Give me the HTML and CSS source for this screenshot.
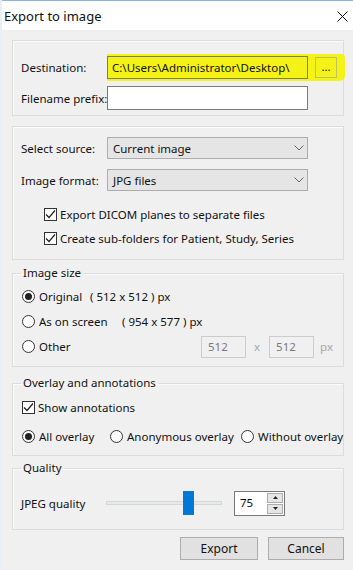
FILE: index.html
```html
<!DOCTYPE html>
<html>
<head>
<meta http-equiv="Content-Type" content="text/html; charset=utf-8">
<title>Export to image</title>
<link rel="stylesheet" href="styles.css">
</head>
<body>
<div class="window">
  <div class="titlebar">
    <span class="title">Export to image</span>
    <svg class="close" width="11" height="11" viewBox="0 0 11 11"><path d="M0.5 0.5 L10.5 10.5 M10.5 0.5 L0.5 10.5" stroke="#111" stroke-width="1" fill="none"/></svg>
  </div>
  <div class="content">
    <fieldset class="group dest">
      <div class="form-row">
        <span class="lbl">Destination:</span>
        <span class="mark">
          <span class="textbox hl">C:\Users\Administrator\Desktop\</span>
          <span class="browse">...</span>
        </span>
      </div>
      <div class="form-row gap">
        <span class="lbl">Filename prefix:</span>
        <span class="textbox tall"></span>
      </div>
    </fieldset>

    <fieldset class="group source">
      <div class="form-row">
        <span class="lbl">Select source:</span>
        <span class="combo">Current image<svg class="chev" width="10" height="6" viewBox="0 0 10 6"><path d="M0.5 0.5 L5 5 L9.5 0.5" stroke="#666" fill="none"/></svg></span>
      </div>
      <div class="form-row combo-gap">
        <span class="lbl">Image format:</span>
        <span class="combo">JPG files<svg class="chev" width="10" height="6" viewBox="0 0 10 6"><path d="M0.5 0.5 L5 5 L9.5 0.5" stroke="#666" fill="none"/></svg></span>
      </div>
      <div class="check-row indent first">
        <span class="checkbox"><svg width="11" height="11" viewBox="0 0 11 11"><path d="M1 5.5 L4 8.5 L10 1.5" stroke="#222" stroke-width="1.2" fill="none"/></svg></span>
        <span>Export DICOM planes to separate files</span>
      </div>
      <div class="check-row indent second">
        <span class="checkbox"><svg width="11" height="11" viewBox="0 0 11 11"><path d="M1 5.5 L4 8.5 L10 1.5" stroke="#222" stroke-width="1.2" fill="none"/></svg></span>
        <span>Create sub-folders for Patient, Study, Series</span>
      </div>
    </fieldset>

    <fieldset class="group size">
      <legend>Image size</legend>
      <div class="radio-row">
        <span class="opt w-orig"><span class="radio on"></span>Original</span>
        <span>( 512 x 512 ) px</span>
      </div>
      <div class="radio-row">
        <span class="opt w-screen"><span class="radio"></span>As on screen</span>
        <span>( 954 x 577 ) px</span>
      </div>
      <div class="radio-row">
        <span class="opt w-other"><span class="radio"></span>Other</span>
        <span class="numbox">512</span>
        <span class="dim times">x</span>
        <span class="numbox">512</span>
        <span class="dim px">px</span>
      </div>
    </fieldset>

    <fieldset class="group overlay">
      <legend>Overlay and annotations</legend>
      <div class="check-row">
        <span class="checkbox"><svg width="11" height="11" viewBox="0 0 11 11"><path d="M1 5.5 L4 8.5 L10 1.5" stroke="#222" stroke-width="1.2" fill="none"/></svg></span>
        <span>Show annotations</span>
      </div>
      <div class="radio-row ov">
        <span class="opt w-all"><span class="radio on"></span>All overlay</span>
        <span class="opt w-anon"><span class="radio"></span>Anonymous overlay</span>
        <span class="opt"><span class="radio"></span>Without overlay</span>
      </div>
    </fieldset>

    <fieldset class="group quality">
      <legend>Quality</legend>
      <div class="quality-row">
        <span class="lbl">JPEG quality</span>
        <span class="slider"><span class="track"></span><span class="thumb"></span></span>
        <span class="spin">
          <span class="spin-val">75</span>
          <span class="spin-btns">
            <span class="spin-btn"><svg width="5" height="3" viewBox="0 0 5 3"><path d="M0 3 L2.5 0 L5 3 Z" fill="#222"/></svg></span>
            <span class="spin-btn"><svg width="5" height="3" viewBox="0 0 5 3"><path d="M0 0 L2.5 3 L5 0 Z" fill="#222"/></svg></span>
          </span>
        </span>
      </div>
    </fieldset>

    <div class="buttons">
      <span class="btn export">Export</span>
      <span class="btn cancel">Cancel</span>
    </div>
  </div>
</div>
</body>
</html>
```

FILE: styles.css
```css
body { margin: 0; background: #f0f0f0; }
.window {
  width: 353px;
  height: 570px;
  background: #f0f0f0;
  font-family: "Noto Sans", "Open Sans", sans-serif;
  font-size: 11.5px;
  color: #111;
  overflow: hidden;
  box-sizing: border-box;
  border-left: 2px solid #e9eefb;
}
.titlebar {
  height: 30px;
  box-sizing: border-box;
  background: #fff;
  border-top: 1px solid #8fb2dd;
  display: flex;
  align-items: center;
  justify-content: space-between;
  padding: 0 5px 0 2px;
}
.title { font-size: 13px; }
.close { margin-top: 1px; }

.content { padding: 10px 9px 0 10px; }

.group {
  margin: 0;
  padding: 0 8px;
  border: 1px solid #dcdcdc;
  box-shadow: inset 1px 1px 0 #fbfbfb;
  min-width: 0;
}
.group legend {
  padding: 0 2px;
  margin-left: 0;
  line-height: 16px;
  height: 16px;
}

.form-row { display: flex; align-items: center; }
.lbl { width: 86px; flex: none; white-space: nowrap; }

/* destination */
.dest { padding-top: 15px; padding-bottom: 5px; }
.dest .form-row.gap { margin-top: 7px; }
.mark {
  display: flex;
  align-items: center;
  background: #f5f218;
  padding: 2px 8px 2px 0;
  margin: -2px 0;
  border-radius: 0 4px 5px 0;
}
.textbox {
  width: 201px;
  height: 23px;
  box-sizing: border-box;
  border: 1px solid #7a7a7a;
  background: #fff;
  padding: 0 4px;
  line-height: 21px;
  white-space: nowrap;
  overflow: hidden;
}
.textbox.tall { height: 24px; }
.textbox.hl { background: #f5f218; }
.browse {
  margin-left: 7px;
  width: 22px;
  height: 21px;
  box-sizing: border-box;
  border: 1px solid #c2c25a;
  text-align: center;
  line-height: 17px;
}

/* source */
.source { margin-top: 10px; padding-top: 10px; padding-bottom: 14px; }
.combo {
  width: 201px;
  height: 22px;
  box-sizing: border-box;
  border: 1px solid #adadad;
  background: #e5e5e5;
  display: flex;
  align-items: center;
  justify-content: space-between;
  padding: 0 3px 0 5px;
}
.combo-gap { margin-top: 10px; }
.check-row { display: flex; align-items: center; height: 14px; }
.check-row.indent { padding-left: 23px; }
.check-row.first { margin-top: 16px; }
.check-row.second { margin-top: 10px; }
.checkbox {
  width: 13px;
  height: 13px;
  box-sizing: border-box;
  border: 1px solid #333;
  background: #fff;
  margin-right: 3px;
  display: flex;
  align-items: center;
  justify-content: center;
  flex: none;
}

/* size */
.size { margin-top: 5px; padding-top: 3px; padding-bottom: 7px; }
.radio-row { display: flex; align-items: center; height: 25px; }
.opt { display: flex; align-items: center; white-space: nowrap; flex: none; }
.radio {
  width: 13px;
  height: 13px;
  box-sizing: border-box;
  border: 1px solid #333;
  border-radius: 50%;
  background: #fff;
  margin: 0 4px 0 1px;
  position: relative;
  flex: none;
}
.radio.on::after {
  content: "";
  position: absolute;
  left: 2px;
  top: 2px;
  width: 7px;
  height: 7px;
  border-radius: 50%;
  background: #222;
}
.w-orig { width: 69px; }
.w-screen { width: 101px; }
.w-other { width: 180px; }
.numbox {
  width: 45px;
  height: 22px;
  box-sizing: border-box;
  border: 1px solid #cccccc;
  background: #f0f0f0;
  color: #7a7a7a;
  line-height: 20px;
  padding-left: 6px;
  flex: none;
}
.dim { color: #a6a6a6; }
.times { margin: 0 9px 0 8px; }
.px { margin-left: 6px; }

/* overlay */
.overlay { margin-top: 8px; padding-top: 10px; padding-bottom: 7px; }
.overlay .check-row { padding-left: 1px; height: 12px; }
.radio-row.ov { margin-top: 11px; height: 24px; }
.w-all { width: 88px; }
.w-anon { width: 131px; }

/* quality */
.quality { margin-top: 4px; padding-top: 14px; padding-bottom: 13px; }
.quality-row { display: flex; align-items: center; height: 26px; }
.quality .lbl { width: 85px; }
.slider { position: relative; width: 116px; height: 24px; flex: none; }
.track {
  position: absolute;
  left: 0;
  right: 0;
  top: 10px;
  height: 4px;
  box-sizing: border-box;
  background: #e7eaea;
  border: 1px solid #d6d6d6;
}
.thumb {
  position: absolute;
  left: 77px;
  top: 0;
  width: 11px;
  height: 24px;
  background: #0078d7;
}
.spin {
  margin-left: 12px;
  width: 51px;
  height: 25px;
  box-sizing: border-box;
  border: 1px solid #7a7a7a;
  background: #fff;
  display: flex;
  justify-content: space-between;
}
.spin-val { padding-left: 5px; line-height: 21px; }
.spin-btns { display: flex; flex-direction: column; width: 17px; padding: 1px 1px 1px 0; gap: 1px; box-sizing: border-box; }
.spin-btn {
  flex: 1;
  background: #e5e5e5;
  border: 1px solid #adadad;
  display: flex;
  align-items: center;
  justify-content: center;
}

/* buttons */
.buttons { display: flex; justify-content: flex-end; gap: 10px; margin-top: 7px; }
.btn {
  height: 23px;
  box-sizing: border-box;
  border: 1px solid #adadad;
  background: #e1e1e1;
  text-align: center;
  line-height: 21px;
  font-size: 12px;
}
.export { width: 78px; }
.cancel { width: 76px; }
```
